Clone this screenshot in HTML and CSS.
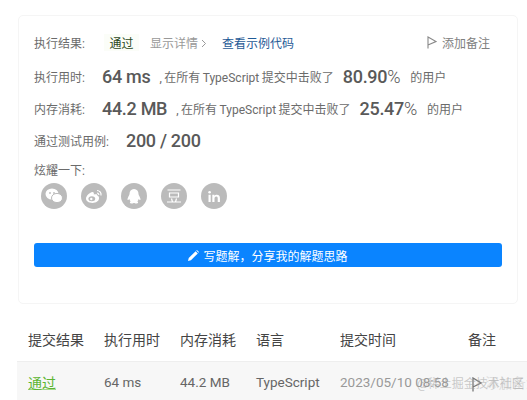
FILE: index.html
```html
<!DOCTYPE html>
<html lang="zh-CN">
<head>
    <meta charset="UTF-8">
    <title>提交记录</title>
    <link rel="stylesheet" href="styles.css">
</head>
<body>
    <div class="card">
        <div class="row row-result">
            <span class="label">执行结果:</span>
            <span class="status">通过</span>
            <span class="details">显示详情 <svg width="6" height="9" viewBox="0 0 6 9"><path d="M1 1l3.500 3.500L1 8" fill="none" stroke="#999" stroke-width="1"/></svg></span>
            <a class="sample">查看示例代码</a>
            <span class="note">
                <svg width="10" height="13" viewBox="0 0 10 13"><path d="M1 12.500V1l8 4.500L1 9" fill="none" stroke="#888" stroke-width="1.100"/></svg>
                添加备注
            </span>
        </div>
        <div class="row">
            <span class="label">执行用时:</span>
            <b class="num num-first">64 ms</b>
            <span class="desc">, 在所有 TypeScript 提交中击败了</span>
            <b class="num num-pct">80.90<i>%</i></b>
            <span class="desc">的用户</span>
        </div>
        <div class="row">
            <span class="label">内存消耗:</span>
            <b class="num num-first">44.2 MB</b>
            <span class="desc">, 在所有 TypeScript 提交中击败了</span>
            <b class="num num-pct">25.47<i>%</i></b>
            <span class="desc">的用户</span>
        </div>
        <div class="row">
            <span class="label">通过测试用例:</span>
            <b class="num num-cases">200 / 200</b>
        </div>
        <div class="share-label">炫耀一下:</div>
        <div class="share">
            <span class="share-icon">
                <svg width="18" height="16" viewBox="0 0 18 16"><ellipse cx="7" cy="6" rx="6.500" ry="5.500" fill="#fff"/><ellipse cx="12" cy="10" rx="5.500" ry="4.600" fill="#fff" stroke="#bbb"/><circle cx="5" cy="5" r=".9" fill="#bbb"/><circle cx="9" cy="5" r=".9" fill="#bbb"/></svg>
            </span>
            <span class="share-icon">
                <svg width="18" height="15" viewBox="0 0 18 15"><path d="M7.500 14C3.500 14 1 12 1 9.600C1 7 5 3 7.500 3C9 3 9 4.500 8.800 5.500C10.500 5 12.500 5 12.500 6.800C14 7.300 14 8.300 14 9.300C14 12 11 14 7.500 14Z" fill="#fff"/><ellipse cx="6.800" cy="9.800" rx="3.400" ry="2.500" fill="#bbb"/><circle cx="6.300" cy="10" r="1.200" fill="#fff"/><path d="M12 1.500c2.500 0 4.500 2 4 5M12 4c1 0 2 .8 1.800 2" fill="none" stroke="#fff" stroke-width="1.200"/></svg>
            </span>
            <span class="share-icon">
                <svg width="16" height="17" viewBox="0 0 16 17"><path d="M8 1C5 1 3.500 3.200 3.500 6C3.500 7 2 8.800 1.500 11C1.300 12.500 2.500 12 3.300 11C3.600 12 4 12.800 4.600 13.400C3.500 14 3.500 15.500 5.500 15.500C7 15.500 7.500 15 8 15C8.500 15 9 15.500 10.500 15.500C12.500 15.500 12.500 14 11.400 13.400C12 12.800 12.400 12 12.700 11C13.500 12 14.700 12.500 14.500 11C14 8.800 12.500 7 12.500 6C12.500 3.200 11 1 8 1Z" fill="#fff"/></svg>
            </span>
            <span class="share-icon">
                <svg width="16" height="16" viewBox="0 0 16 16"><path d="M1.500 2h13M3.500 5h9v4h-9zM1 14h14M5.500 10.500l1 3.500M10.500 10.500l-1 3.500" fill="none" stroke="#fff" stroke-width="1.200"/></svg>
            </span>
            <span class="share-icon">
                <svg width="12" height="11" viewBox="0 0 14 13"><path d="M.5 4.500h2.600V13H.5zM5 4.500h2.500v1.200C8 4.800 9 4.300 10.300 4.300 13 4.300 14 6 14 8.500V13h-2.600V9c0-1.400-.4-2.400-1.600-2.400-1.300 0-2.200 1-2.200 2.400v4H5z" fill="#fff"/><circle cx="1.800" cy="1.600" r="1.500" fill="#fff"/></svg>
            </span>
        </div>
        <button class="solution">
            <svg width="11" height="11" viewBox="0 0 12 12"><path d="M0 12l.8-3.200L8.300 1.300l2.400 2.400-7.500 7.500zM9 .6l.7-.6 2.300 2.300-.6.700z" fill="#fff"/></svg>
            写题解，分享我的解题思路
        </button>
    </div>

    <table class="records">
        <tr>
            <th class="col-result">提交结果</th>
            <th class="col-time">执行用时</th>
            <th class="col-mem">内存消耗</th>
            <th class="col-lang">语言</th>
            <th class="col-date">提交时间</th>
            <th>备注</th>
        </tr>
        <tr>
            <td class="passed">通过</td>
            <td>64 ms</td>
            <td>44.2 MB</td>
            <td>TypeScript</td>
            <td class="date">2023/05/10 08:58</td>
            <td class="note-cell">
                <svg width="10" height="15" viewBox="0 0 10 15"><path d="M1 14.500V1l8 5-8 4" fill="none" stroke="#777" stroke-width="1.300"/></svg>
                <span class="note-faint">添加备注</span>
            </td>
        </tr>
    </table>
    <div class="watermark">@稀土掘金技术社区</div>
</body>
</html>
```

FILE: styles.css
```css
html, body {
    height: 400px;
    overflow: hidden;
}
body {
    margin: 0;
    position: relative;
    background: #fff;
    color: #6b6b6b;
    font-family: Roboto, "Noto Sans CJK SC", sans-serif;
    font-size: 12px;
}
.card {
    box-sizing: border-box;
    width: 500px;
    height: 289px;
    margin: 15px 0 0 18px;
    padding: 18px 15px 0;
    border: 1px solid #f5f5f5;
    border-radius: 5px;
}
.row {
    display: flex;
    align-items: center;
    height: 32px;
    white-space: nowrap;
}
.row-result {
    height: 16px;
    margin-bottom: 10px;
}
.label {
    width: 68px;
    flex: none;
}
.status {
    box-sizing: border-box;
    width: 35px;
    margin-left: 2px;
    padding: 0 4px;
    color: #2b4a1d;
    background: #fbfdf8;
    text-align: center;
}
.details {
    margin-left: 11px;
    color: #999;
}
.sample {
    margin-left: 15px;
    color: #1f5a96;
}
.note {
    display: flex;
    align-items: center;
    gap: 5px;
    margin-left: auto;
    margin-right: 12px;
    color: #808080;
}
.desc {
    word-spacing: -.5px;
}
.num {
    font-family: Roboto, sans-serif;
    font-weight: 500;
    font-size: 18px;
    letter-spacing: -.3px;
    color: #595959;
}
.num i {
    font-style: normal;
    font-weight: 300;
}
.num-first {
    margin-right: 9px;
}
.num-pct {
    margin: 0 10px 0 9px;
}
.num-cases {
    margin-left: 24px;
}
.share-label {
    margin-top: 6px;
    line-height: 18px;
}
.share {
    display: flex;
    gap: 14px;
    margin: 3px 0 0 7px;
}
.share-icon {
    display: flex;
    align-items: center;
    justify-content: center;
    width: 26px;
    height: 26px;
    border-radius: 50%;
    background: #bbb;
}
.solution {
    display: flex;
    align-items: center;
    justify-content: center;
    gap: 4px;
    width: 468px;
    height: 24px;
    margin-top: 34px;
    padding: 0;
    border: 0;
    border-radius: 3px;
    background: #0a84ff;
    color: #fff;
    font-family: inherit;
    font-size: 12px;
}
.records {
    width: 510px;
    margin: 14px 0 0 17px;
    border-collapse: collapse;
    table-layout: fixed;
}
.records th, .records td {
    box-sizing: border-box;
    padding: 0 0 0 11px;
    white-space: nowrap;
}
.records th {
    height: 43px;
    font-weight: 400;
    font-size: 14px;
    color: #444;
    text-align: left;
    border-bottom: 1px solid #eee;
}
.records td {
    height: 44px;
    padding-bottom: 3px;
    background: #f7f7f7;
    font-size: 13.500px;
    color: #666;
}
.col-result, .col-time, .col-mem { width: 76px; }
.col-lang { width: 84px; }
.col-date { width: 128px; }
.records .passed {
    color: #5cb531;
    font-size: 14px;
    text-decoration: underline;
    text-decoration-color: #a5d88c;
}
.records .date {
    color: #999;
}
.note-cell svg {
    margin-left: 4px;
    vertical-align: middle;
}
.note-faint {
    color: #ddd;
}
.watermark {
    position: absolute;
    left: 417px;
    top: 374px;
    font-size: 12px;
    color: rgba(160, 160, 160, .55);
    white-space: nowrap;
}
```
